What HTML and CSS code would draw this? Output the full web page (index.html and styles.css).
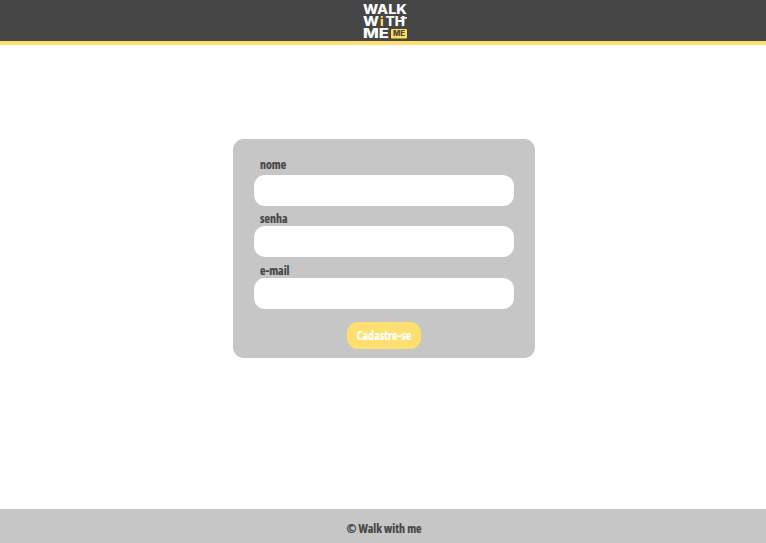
FILE: index.html
```html
<!DOCTYPE html>
<html lang="pt-BR">
<head>
<meta charset="utf-8">
<title>Walk with me</title>
<link rel="stylesheet" href="styles.css">
</head>
<body>
<header class="header">
<svg class="logo" width="46" height="37" viewBox="362 3 46 37" role="img" aria-label="Walk with me">
<g class="logo-text">
<text x="363" y="14" textLength="44" lengthAdjust="spacingAndGlyphs">WALK</text>
<text x="363" y="26" textLength="16" lengthAdjust="spacingAndGlyphs">W</text>
<text x="380" y="26" class="accent">i</text>
<text x="385.5" y="26" textLength="19.5" lengthAdjust="spacingAndGlyphs">TH</text>
<path d="M400.5 17h6.5v1.7h-6.5z"/>
<text x="363" y="38" textLength="26" lengthAdjust="spacingAndGlyphs">ME</text>
</g>
<rect class="badge" x="391" y="29" width="16" height="9.5" rx="1"/>
<text class="badge-text" x="393" y="36.3" textLength="12" lengthAdjust="spacingAndGlyphs">ME</text>
</svg>
</header>
<main class="main">
<form class="card">
<label class="label" for="nome"><span>nome</span></label>
<input class="field" id="nome" type="text">
<label class="label" for="senha"><span>senha</span></label>
<input class="field" id="senha" type="password">
<label class="label" for="email"><span>e-mail</span></label>
<input class="field" id="email" type="email">
<button class="submit" type="button"><span>Cadastre-se</span></button>
</form>
</main>
<footer class="footer"><span>© Walk with me</span></footer>
</body>
</html>
```
FILE: styles.css
```css
* { box-sizing: border-box; }
body {
  margin: 0;
  height: 543px;
  display: flex;
  flex-direction: column;
  background: #fff;
  color: #464646;
  font: 700 12px/16px "Open Sans", "Noto Sans", sans-serif;
  font-stretch: 75%;
  -webkit-text-stroke: 0.2px currentColor;
}
.header {
  height: 45px;
  padding-top: 3px;
  background: #464646;
  border-bottom: 4px solid #ffdf70;
  display: flex;
  justify-content: center;
  padding-left: 4px;
}
.logo { display: block; overflow: visible; -webkit-text-stroke: 0; }
.logo-text { fill: #fff; font: 800 12.6px Inter, sans-serif; }
.accent, .badge { fill: #ffdc50; }
.badge-text { fill: #464646; font: 800 7.5px Inter, sans-serif; }
.main { flex: 1; padding: 94px 0 0 233px; }
.card {
  width: 302px;
  height: 219px;
  padding: 18px 21px 0;
  border-radius: 11px;
  background: #c6c6c6;
  display: flex;
  flex-direction: column;
}
.label { height: 17.7px; margin: 0 0 0 6px; }
.label:not(:first-child) { height: 15.8px; margin-top: 5px; }
.label:not(:first-child) span { position: relative; top: 0.5px; }
.field {
  width: 260.4px;
  height: 31px;
  padding: 0 10px;
  border: 0;
  border-radius: 11px;
  background: #fff;
  font: inherit;
}
.submit {
  align-self: center;
  width: 73.4px;
  height: 27px;
  margin-top: 12.3px;
  padding: 2px 0 0;
  border: 0;
  border-radius: 11px;
  background: #ffdf70;
  color: #fff;
  font: inherit;
}
.footer {
  height: 34px;
  padding: 12px 0 0 2px;
  background: #c6c6c6;
  text-align: center;
}
```
